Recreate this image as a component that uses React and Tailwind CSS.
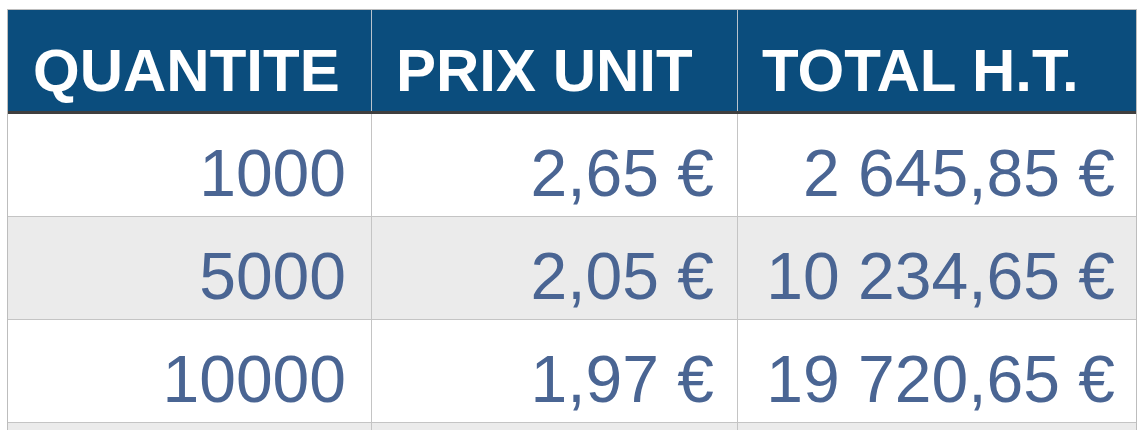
import React from 'react';

const rows = [
  { qty: '1000', unit: '2,65 €', total: '2 645,85 €' },
  { qty: '5000', unit: '2,05 €', total: '10 234,65 €' },
  { qty: '10000', unit: '1,97 €', total: '19 720,65 €' },
  { qty: '', unit: '', total: '' },
];

export default function App() {
  return (
    <div className="w-[1146px] h-[430px] overflow-hidden bg-white pl-[7px] pt-[9px]" style={{ fontFamily: '"Liberation Sans", Arial, sans-serif' }}>
      <div className="w-[1130px] border border-[#bdbdbd]">
        {/* en-tête */}
        <div className="grid grid-cols-[364px_366px_398px] h-[104px] bg-[#0b4d7d] border-b-[3px] border-[#3f3f3f]">
          <div className="border-r border-[#b9c3cd] pl-[25px] pt-[31px] text-[60px] leading-[60px] font-bold text-white whitespace-nowrap">QUANTITE</div>
          <div className="border-r border-[#b9c3cd] pl-[24px] pt-[31px] text-[60px] leading-[60px] font-bold text-white whitespace-nowrap">PRIX UNIT</div>
          <div className="pl-[24px] pt-[31px] text-[60px] leading-[60px] font-bold text-white whitespace-nowrap">TOTAL H.T.</div>
        </div>

        {rows.map((r, i) => (
          <div
            key={i}
            className={`grid grid-cols-[364px_366px_398px] h-[103px] border-b border-[#c4c4c4] ${i % 2 === 1 ? 'bg-[#ebebeb]' : 'bg-white'}`}
          >
            <div className="border-r border-[#c4c4c4] pr-[25px] pt-[26px] text-right text-[66px] leading-[66px] text-[#4a6593] whitespace-nowrap">{r.qty}</div>
            <div className="border-r border-[#c4c4c4] pr-[23px] pt-[26px] text-right text-[66px] leading-[66px] text-[#4a6593] whitespace-nowrap">{r.unit}</div>
            <div className="pr-[21px] pt-[26px] text-right text-[66px] leading-[66px] text-[#4a6593] whitespace-nowrap">{r.total}</div>
          </div>
        ))}
      </div>
    </div>
  );
}
